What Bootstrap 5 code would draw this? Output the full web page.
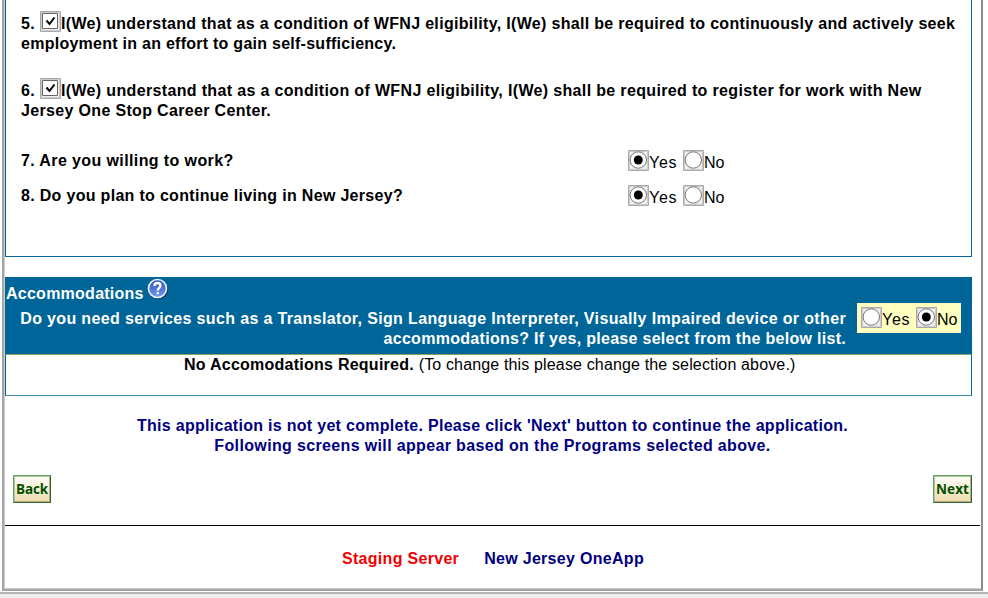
<!DOCTYPE html>
<html lang="en">
<head>
<meta charset="utf-8">
<title>New Jersey OneApp</title>
<meta name="viewport" content="width=device-width, initial-scale=1">
<link href="https://cdn.jsdelivr.net/npm/bootstrap@5.3.0/dist/css/bootstrap.min.css" rel="stylesheet">
<style>
body{font:16px/20px "Liberation Sans",Arial,sans-serif;color:#000;background:#efefef;height:598px;overflow:hidden;letter-spacing:.3px}
.page-area{height:594px;background:#fff;border-bottom:2px solid #b4b4b4}
.frame{width:981px;height:591px;margin-left:2px;border:solid #a5a5a5;border-width:0 2px 2px;border-right-color:#8c8c8c;box-shadow:inset 1px -1px #ccc;padding-left:1px}
.panel{width:967px;border:1px solid #069;border-top:0}
.work{height:257px;padding:14px 0 0 15px}
.statement{height:40px;margin-bottom:27px}
.statement svg{margin:-3px 0 2px}
.num{width:19px;flex:none}
.question{height:20px;margin-bottom:15px}
.work .question:nth-child(3){margin-top:30px}
.question .asked{width:607px}
.ctl{width:21px;height:21px;flex:none}
.opts{letter-spacing:0;height:21px}
.question .opts{margin-top:-1px}
.opts span{padding-top:3px}
.opts .first{width:34px;letter-spacing:.7px}
.accom{width:967px;height:77px;background:#069;margin-top:20px;color:#fff}
.accom-title{height:31px;padding:6px 0 0 1px}
.accom-title span{padding-top:1px}
.accom-title svg{margin:-5px 0 0 3px}
.accom .ask{width:841px;padding-top:1px}
.choice{width:104px;height:30px;background:#ffffc0;color:#000;margin:-5px 0 0 11px;padding:4px 0 0 4px}
.result{height:42px;border-top:1px solid #8aa361;border-bottom:1px solid #4690b5}
.result div{padding-left:178px}
.navy{color:#000080}
.notice{width:975px;margin-top:20px}
.actions{width:967px;margin-top:19px;padding-left:8px}
.act{width:38px;height:28px;border:1px solid #69a069;border-right-color:#326432;border-bottom-color:#326432;box-shadow:inset 1px 1px #a8c6a0,inset -1px -1px #b3ad80;border-radius:0;background:linear-gradient(#fffefa,#efdcae);color:#005000;font:bold 13.5px/26px "Open Sans","Noto Sans",sans-serif;padding:0;letter-spacing:-.1px}
.act.next{width:39px;letter-spacing:.1px}
.sep{width:975px;border-top:1px solid #000;margin-top:22px}
.foot{height:20px;margin:23px 0 0 337px;gap:25px}
.staging{color:#f00000}
#a{letter-spacing:.316px}#b{letter-spacing:.26px}#c{letter-spacing:.344px}#d{letter-spacing:.333px}
#e{letter-spacing:.39px}#f{letter-spacing:.31px}#g{letter-spacing:.25px}#h{letter-spacing:.354px}
#i{letter-spacing:.293px}#j{letter-spacing:.25px}#k{letter-spacing:.15px}#l{letter-spacing:.29px}#m{letter-spacing:.353px}
</style>
<script src="https://cdn.jsdelivr.net/npm/bootstrap@5.3.0/dist/js/bootstrap.bundle.min.js"></script>
</head>
<body>
<svg width="0" height="0" class="d-none" aria-hidden="true">
<symbol id="check" viewBox="0 0 21 21"><path fill="#efefef" stroke="#aaa" d="M.5.5h20v20H.5z"/><path fill="none" stroke="#ccc" d="M1.5 19.5v-18h18v18z"/><path fill="#fff" stroke="#666" d="M2.5 2.500h15v15h-15z"/><path fill="none" stroke="#000" stroke-width="2" d="M6.500 9.500l3 3.500 5-6.500"/></symbol>
<symbol id="off" viewBox="0 0 21 21"><path fill="#efefef" stroke="#aaa" d="M.5.5h20v20H.5z"/><path fill="none" stroke="#ccc" d="M1.500 19.500v-18h18v18z"/><circle cx="10.300" cy="10" r="8.200" fill="#fff" stroke="#777"/></symbol>
<symbol id="on" viewBox="0 0 21 21"><use href="#off"/><circle cx="10.300" cy="10" r="4.500"/></symbol>
</svg>
<div class="page-area">
<main class="frame d-flex flex-column">
<section class="panel work fw-bold text-nowrap">
<div class="statement"><div class="d-flex"><span class="num">5.</span><svg class="ctl"><use href="#check"/></svg><span id="a">I(We) understand that as a condition of WFNJ eligibility, I(We) shall be required to continuously and actively seek</span></div><div id="b">employment in an effort to gain self-sufficiency.</div></div>
<div class="statement"><div class="d-flex"><span class="num">6.</span><svg class="ctl"><use href="#check"/></svg><span id="c">I(We) understand that as a condition of WFNJ eligibility, I(We) shall be required to register for work with New</span></div><div id="d">Jersey One Stop Career Center.</div></div>
<div class="question d-flex"><span class="asked" id="e">7. Are you willing to work?</span><div class="opts d-flex fw-normal"><svg class="ctl"><use href="#on"/></svg><span class="first">Yes</span><svg class="ctl"><use href="#off"/></svg><span>No</span></div></div>
<div class="question d-flex"><span class="asked" id="f">8. Do you plan to continue living in New Jersey?</span><div class="opts d-flex fw-normal"><svg class="ctl"><use href="#on"/></svg><span class="first">Yes</span><svg class="ctl"><use href="#off"/></svg><span>No</span></div></div>
</section>
<section class="accom fw-bold text-nowrap">
<div class="accom-title d-flex"><span id="g">Accommodations</span>
<svg width="22" height="22" viewBox="0 0 22 22"><defs><linearGradient id="blue" x2="0" y2="1"><stop stop-color="#2d54bd"/><stop offset="1" stop-color="#6f9aee"/></linearGradient></defs><circle cx="11.500" cy="11.500" r="9.700" fill="#173451"/><circle cx="10.500" cy="10.500" r="9" fill="url(#blue)" stroke="#e5edff" stroke-width="1.700"/><path d="M7.500 8q0-3 3-3t3 2.700c0 2.300-2.800 2.300-2.800 5M10.700 14v2.300" fill="none" stroke="#fff" stroke-width="2.300"/></svg></div>
<div class="d-flex"><div class="ask text-end"><div id="h">Do you need services such as a Translator, Sign Language Interpreter, Visually Impaired device or other</div><div id="i">accommodations? If yes, please select from the below list.</div></div>
<div class="choice opts d-flex fw-normal"><svg class="ctl"><use href="#off"/></svg><span class="first">Yes</span><svg class="ctl"><use href="#on"/></svg><span>No</span></div></div>
</section>
<section class="panel result text-nowrap"><div><b id="j">No Accomodations Required.</b> <span id="k">(To change this please change the selection above.)</span></div></section>
<div class="notice navy fw-bold text-center text-nowrap"><div id="l">This application is not yet complete. Please click 'Next' button to continue the application.</div><div id="m">Following screens will appear based on the Programs selected above.</div></div>
<div class="actions d-flex justify-content-between"><button class="btn act">Back</button><button class="btn act next">Next</button></div>
<div class="sep"></div>
<footer class="foot d-flex fw-bold text-nowrap"><span class="staging">Staging Server</span><span class="navy">New Jersey OneApp</span></footer>
</main>
</div>
</body>
</html>
